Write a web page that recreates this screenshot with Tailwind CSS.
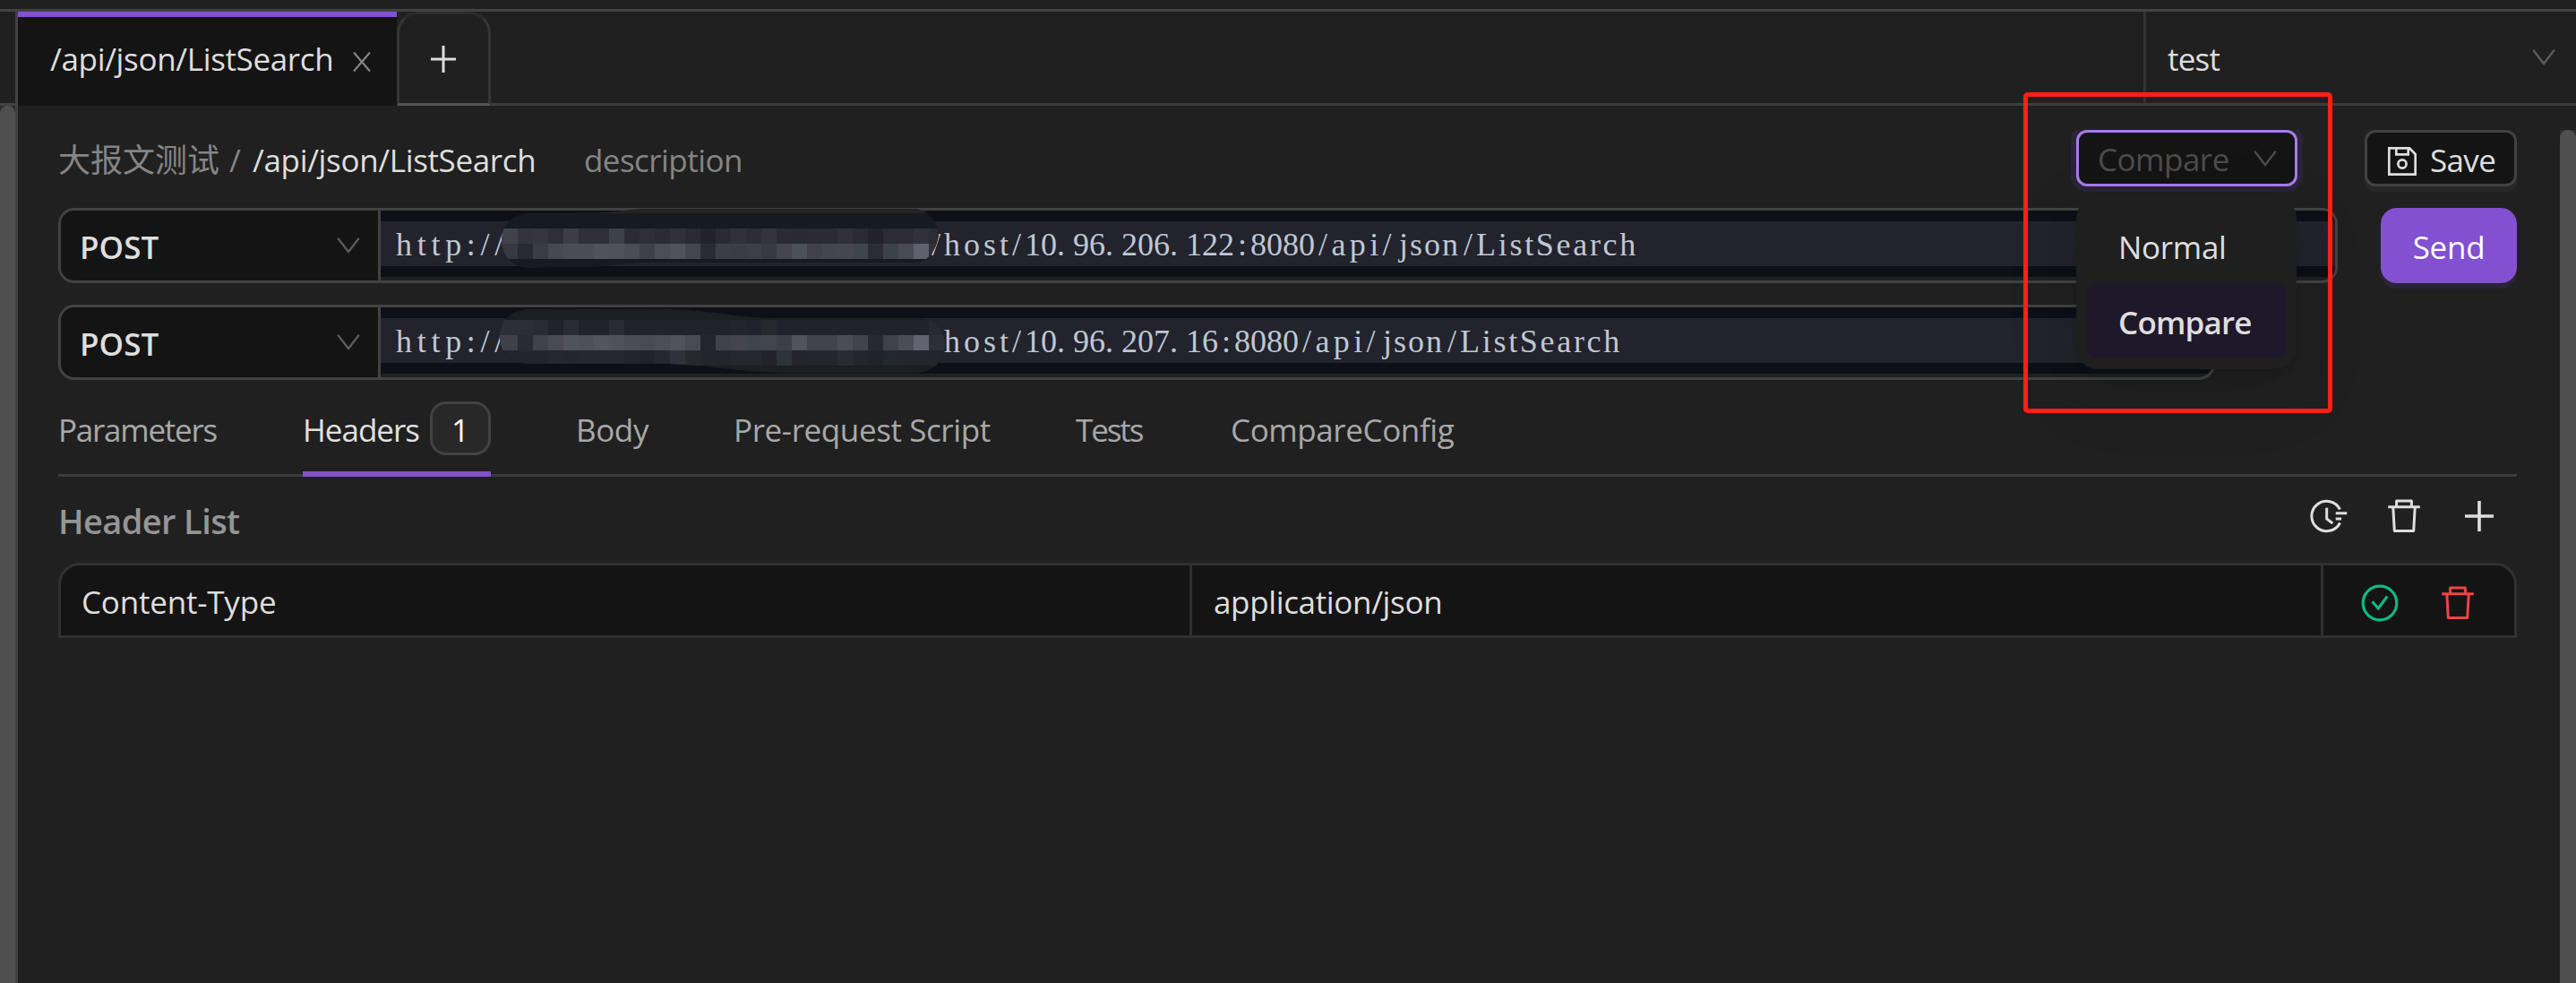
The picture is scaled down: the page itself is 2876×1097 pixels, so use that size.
<!DOCTYPE html>
<html lang="en">
<head>
<meta charset="utf-8">
<title>ListSearch</title>
<script src="https://cdn.jsdelivr.net/npm/@tailwindcss/browser@4"></script>
</head>
<body class="relative flex h-[1097px] w-[2876px] flex-col overflow-hidden bg-[#202020] font-['Open_Sans','Noto_Sans_CJK_SC',sans-serif] text-[35px] leading-[48px] whitespace-nowrap text-[#dedede]">
<svg class="hidden">
  <symbol id="chevron" viewBox="0 0 26 18"><path d="M1.2 .8L13 16L24.800 .8" fill="none" stroke="currentColor" stroke-width="2.300"/></symbol>
  <symbol id="trash" viewBox="0 0 44 44"><path d="M4.200 11.700H39.800M13.600 11V5H30.400V11M9.800 12L11.300 38.500H32.700L34.200 12" fill="none" stroke="currentColor" stroke-width="3" stroke-linejoin="round"/></symbol>
</svg>

<div class="h-[13px] shrink-0 border-b-[3px] border-[#424242]"></div>

<div class="flex flex-1">
  <!-- side rail with its scrollbar -->
  <aside class="flex w-5 shrink-0 flex-col border-r-[3px] border-[#424242]">
    <div class="h-[105px] border-b-[3px] border-[#424242]"></div>
    <div class="flex-1 bg-[#2c2c2c]"><div class="h-full rounded-t-full bg-[#4f4f4f]"></div></div>
  </aside>

  <div class="flex flex-1 flex-col">
    <!-- request tabs -->
    <div class="flex h-[105px]">
      <div class="flex w-[423px] items-center border-t-[6px] border-[#8250d0] bg-[#141414] pb-[5px] pl-[36px]">
        <span class="w-[337px] tracking-[-0.35px]">/api/json/ListSearch</span>
        <svg class="mt-[5px] h-[22px] w-[22px] text-[#858585]" viewBox="0 0 22 22"><path d="M2 .5L20 21.500M20 .5L2 21.500" stroke="currentColor" stroke-width="2.200"/></svg>
      </div>
      <div class="flex w-[105px] items-center justify-center rounded-t-[24px] border-[3px] border-t-[#2c2c2c] border-x-[#363636] border-b-[#555] pr-[2px]">
        <svg class="h-[30px] w-[30px]" viewBox="0 0 30 30"><path d="M1 15H29M15 0V30" stroke="currentColor" stroke-width="3"/></svg>
      </div>
      <div class="flex-1 border-b-[3px] border-[#3c3c3c]"></div>
      <div class="flex w-[483px] items-center justify-between border-b-[3px] border-l-[3px] border-b-[#3c3c3c] border-l-[#333] pr-[23px] pl-[24px]">
        <span class="pt-[3px] tracking-[-0.8px]">test</span>
        <svg class="h-[18px] w-[26px] text-[#5c5c5c]"><use href="#chevron"/></svg>
      </div>
    </div>

    <div class="flex flex-1">
      <main class="flex w-[2838px] flex-col pt-[27px] pr-[48px] pl-[45px]">
        <!-- breadcrumb -->
        <div class="flex h-[63px] items-center">
          <div class="flex pt-[5px]">
            <span class="w-[191px] text-[36px] text-[#858585]">大报文测试</span>
            <span class="w-[26px] text-[#858585]">/</span>
            <span class="w-[370px] tracking-[-0.35px]">/api/json/ListSearch</span>
            <span class="tracking-[-0.55px] text-[#858585]">description</span>
          </div>
          <div class="ml-auto flex h-[63px] w-[247px] items-center justify-between rounded-[12px] border-[3px] border-[#a77be8] bg-[#141414] pr-[20px] pl-[21px] text-[#4c4c4c] shadow-[0_0_0_6px_#2a2438] [clip-path:inset(0_-8px_-8px_-8px)]">
            <span class="pt-[3px] tracking-[-0.5px]">Compare</span>
            <svg class="h-[18px] w-[26px]"><use href="#chevron"/></svg>
          </div>
          <div class="ml-[75px] flex h-[63px] w-[170px] items-center rounded-[12px] border-[3px] border-[#424242] bg-[#141414] pl-[23px] shadow-[0_6px_0_#282828]">
            <svg class="mt-[7px] h-8 w-8" viewBox="0 0 32 32" fill="none" stroke="currentColor" stroke-width="2.700"><path d="M1.300 1.300H24L30.700 8V30.700H1.300ZM9.300 1.300V8.300H22.700V1.300"/><circle cx="16" cy="19" r="4.600"/></svg>
            <span class="ml-[15px] pt-[5px] tracking-[-0.65px]">Save</span>
          </div>
        </div>

        <!-- base request -->
        <div class="mt-6 flex h-[84px]">
          <div class="relative flex w-[2545px] overflow-hidden rounded-[18px] border-[3px] border-[#424242]">
            <div class="flex w-[357px] items-center justify-between border-r-[3px] border-[#424242] bg-[#141414] pr-[20px] pl-[21px]">
              <span class="pt-1 font-semibold tracking-[0.1px]">POST</span>
              <svg class="h-[18px] w-[26px] text-[#5c5c5c]"><use href="#chevron"/></svg>
            </div>
            <div class="mb-1 flex-1 bg-[#0d1017] pt-3">
              <div class="h-[50px] bg-[#22232d] pt-px pl-[17px] font-['Liberation_Serif',serif] text-[36px] leading-[50px] text-[#bfc7d2]"><span class="tracking-[5.71px]">http://</span><span class="inline-block w-[468px]"></span><span class="pl-1 tracking-[4px]">/host/</span>10<span class="tracking-[9px]">.</span>96<span class="tracking-[9px]">.</span>206<span class="tracking-[9px]">.</span>122<span class="px-1">:</span>8080<span class="pl-1 tracking-[4.4px]">/api/</span><span class="pl-1 tracking-[2px]">json</span><span class="px-1">/</span><span class="tracking-[2.7px]">ListSearch</span></div>
            </div>
          </div>
          <div class="ml-[48px] flex w-[152px] items-center justify-center rounded-[18px] bg-[#8250d0] pt-1 tracking-[-0.25px] text-white shadow-[0_6px_0_#2a2438]">Send</div>
        </div>

        <!-- compared request -->
        <div class="relative mt-6 flex h-[84px] w-[2408px] overflow-hidden rounded-[18px] border-[3px] border-[#424242]">
          <div class="flex w-[357px] items-center justify-between border-r-[3px] border-[#424242] bg-[#141414] pr-[20px] pl-[21px]">
            <span class="pt-1 font-semibold tracking-[0.1px]">POST</span>
            <svg class="h-[18px] w-[26px] text-[#5c5c5c]"><use href="#chevron"/></svg>
          </div>
          <div class="mb-1 flex-1 bg-[#0d1017] pt-3">
            <div class="h-[50px] bg-[#22232d] pt-px pl-[17px] font-['Liberation_Serif',serif] text-[36px] leading-[50px] text-[#bfc7d2]"><span class="tracking-[5.71px]">http://</span><span class="inline-block w-[468px]"></span><span class="pl-1 tracking-[4px]">/host/</span>10<span class="tracking-[9px]">.</span>96<span class="tracking-[9px]">.</span>207<span class="tracking-[9px]">.</span>16<span class="px-1">:</span>8080<span class="pl-1 tracking-[4.4px]">/api/</span><span class="pl-1 tracking-[2px]">json</span><span class="px-1">/</span><span class="tracking-[2.7px]">ListSearch</span></div>
          </div>
        </div>

        <!-- request sections -->
        <nav class="flex h-[108px] border-b-[3px] border-[#3c3c3c] text-[#a8a8a8]">
          <div class="w-[273px] pt-8 tracking-[-1.25px]">Parameters</div>
          <div class="-mb-[3px] flex h-[108px] w-[210px] border-b-[6px] border-[#8250d0] text-[#e0e0e0]">
            <span class="w-[142px] pt-8 tracking-[-1px]">Headers</span>
            <span class="mt-6 flex h-[60px] w-[68px] items-center justify-center rounded-[18px] border-[3px] border-[#424242] bg-[#282828] pt-[3px] text-white">1</span>
          </div>
          <div class="ml-[95px] w-[176px] pt-8 tracking-[-0.4px]">Body</div>
          <div class="w-[382px] pt-8 tracking-[-0.4px]">Pre-request Script</div>
          <div class="w-[173px] pt-8 tracking-[-2.1px]">Tests</div>
          <div class="pt-8 tracking-[-0.4px]">CompareConfig</div>
        </nav>

        <div class="flex h-24 items-center pr-[20px]">
          <span class="pt-px text-[38px] font-semibold tracking-[-0.6px] text-[#959595]">Header List</span>
          <div class="ml-auto flex gap-10 pb-2">
            <svg class="h-11 w-11" viewBox="0 0 44 44" fill="none" stroke="currentColor" stroke-width="3"><path d="M34.500 14.500A16.700 16.700 0 1 0 34.500 29.500M19.700 12.700V25L26.300 30M29.700 18.800H42.300M29.700 25H36"/></svg>
            <svg class="h-11 w-11"><use href="#trash"/></svg>
            <svg class="h-11 w-11" viewBox="0 0 44 44"><path d="M6 22H38M22 5V39" stroke="currentColor" stroke-width="3.600"/></svg>
          </div>
        </div>

        <!-- header table -->
        <div class="flex h-[84px] rounded-t-[24px] border-[3px] border-[#303030] bg-[#141414]">
          <div class="w-[1263px] border-r-[3px] border-[#303030] pt-[17px] pl-[23px] tracking-[-0.2px]">Content-Type</div>
          <div class="w-[1263px] border-r-[3px] border-[#303030] pt-[17px] pl-[24px] tracking-[-0.35px]">application/json</div>
          <div class="flex items-center gap-[43px] pt-[5px] pl-[41px]">
            <svg class="h-11 w-11 text-[#10b981]" viewBox="0 0 44 44" fill="none" stroke="currentColor" stroke-width="3.200"><circle cx="22" cy="22" r="18.800"/><path d="M13.500 20.200L20.300 28L30.300 14.500"/></svg>
            <svg class="h-11 w-11 text-[#ef4444]"><use href="#trash"/></svg>
          </div>
        </div>
      </main>
      <div class="mt-[27px] w-[18px] bg-[#303030]"><div class="h-full rounded-t-full bg-[#4f4f4f]"></div></div>
    </div>
  </div>
</div>

<!-- pixelated strokes over the host names -->
<svg class="absolute top-0 left-0 h-[430px] w-[1070px]" viewBox="0 0 1070 430">
  <clipPath id="c1"><path d="M590 238L675 237C700 236 700 233 730 233H1020C1036 234 1048 248 1048 262C1046 276 1038 293 1020 293H715C690 294 680 297 660 298L590 299C571 298 560 284 560 268C560 252 571 239 590 238Z"/></clipPath>
  <clipPath id="c2"><path d="M590 345L740 344.500C790 346 820 354 870 355.500H1030C1046 359 1055 370 1055 386C1053 403 1042 416 1020 416.500H880C820 415 790 407 745 406L590 406C570 405 558 393 558 376C558 358 570 346 590 345Z"/></clipPath>
  <g clip-path="url(#c1)"><path fill="#161a21" d="M550 230H1060V300H550Z"/><path fill="#232423" d="M670 230H1060V238H670Z"/><g id="m1"></g></g>
  <g clip-path="url(#c2)"><path fill="#1b1e22" d="M550 340H1060V420H550Z"/><path fill="#22232b" d="M550 357H1060V408H550Z"/><g id="m2"></g></g>
</svg>

<!-- mode menu -->
<div class="absolute top-[220px] left-[2318px] flex h-[192px] w-[246px] flex-col rounded-[24px] bg-[#1f1f1f] p-3 shadow-[0_16px_42px_rgba(0,0,0,0.08),0_8px_16px_-10px_rgba(0,0,0,0.12),0_24px_74px_20px_rgba(0,0,0,0.05)]">
  <div class="h-[84px] pt-[20px] pl-[35px] tracking-[-0.3px]">Normal</div>
  <div class="h-[84px] rounded-[12px] bg-[#1f182b] pt-[20px] pl-[35px] font-semibold tracking-[-0.8px]">Compare</div>
</div>

<div class="absolute top-[103px] left-[2259px] h-[358px] w-[345px] rounded-[5px] border-[5px] border-[#ff2012]"></div>

<script>
const rows = [
  ['m1', 255, '42424d 34343f 36363f 2f2f3a 3d3d48 2f2f3a 2f2f3a 3d424a 2b2b33 2f2f38 2b2b35 31313a 2b2b35 22222c 2b2b33 31313b 2d2d36 34343d 2b2b35 2a2a33 2b2b34 2b2b34 31313a 2b2b35 22222c 2c2c36 2c2c36 31313a 2b2b35'],
  ['m1', 272, '383841 292932 3b3b44 464951 4a4d55 4a4d55 50535b 4f5259 4a4d55 40404a 4b4e57 50535b 464650 2b2b35 3d3d47 3b3b45 3e3e48 393942 454550 4c5058 41414b 454550 464650 40444c 2c2c37 3d4149 484b53 60616c 31313c'],
  ['m2', 357, '2e2e37 2e2e36 2b2b33 22222b 2b2b36 22222b 22222b 2b2b36 22222b 22222b 22222b 22222b 22222b 22222b 22222b 24242d 22222b 28282e 22222b 22222b 22222b 22222b 22222b 22222b 22222b 22222b 22222b 22222b 282831'],
  ['m2', 374, '40404a 2a2a33 42424b 4a4a55 50535b 4d5058 52555d 4f525a 4a4d55 484b53 4b4e57 50535b 4a4a54 25252e 41414b 454550 40444c 42454d 3e3e48 50525d 41444c 41444c 4a4d55 41444c 282832 41414b 4a4d55 62636f 2e2e38'],
  ['m2', 391, '24242d 24242d 24242d 26262e 23262f 26262e 26262f 26262f 24242d 22222a 26262e 31313a 28282f 24242c 24242d 26262e 26262e 22222a 2e323a 24242d 25252e 25252e 2a2a32 25252e 22222a 23272f 25252e 25252e 24242d']
];
for (const [id, y, colors] of rows) {
  colors.split(' ').forEach((c, i) => {
    const r = document.createElementNS('http://www.w3.org/2000/svg', 'rect');
    const a = { x: i ? 561 + i * 17 : 557, y, width: i === 0 ? 21 : i === 28 ? 22 : 17, height: 17, fill: '#' + c, 'shape-rendering': 'crispEdges' };
    for (const k in a) r.setAttribute(k, a[k]);
    document.getElementById(id).append(r);
  });
}
</script>
</body>
</html>
